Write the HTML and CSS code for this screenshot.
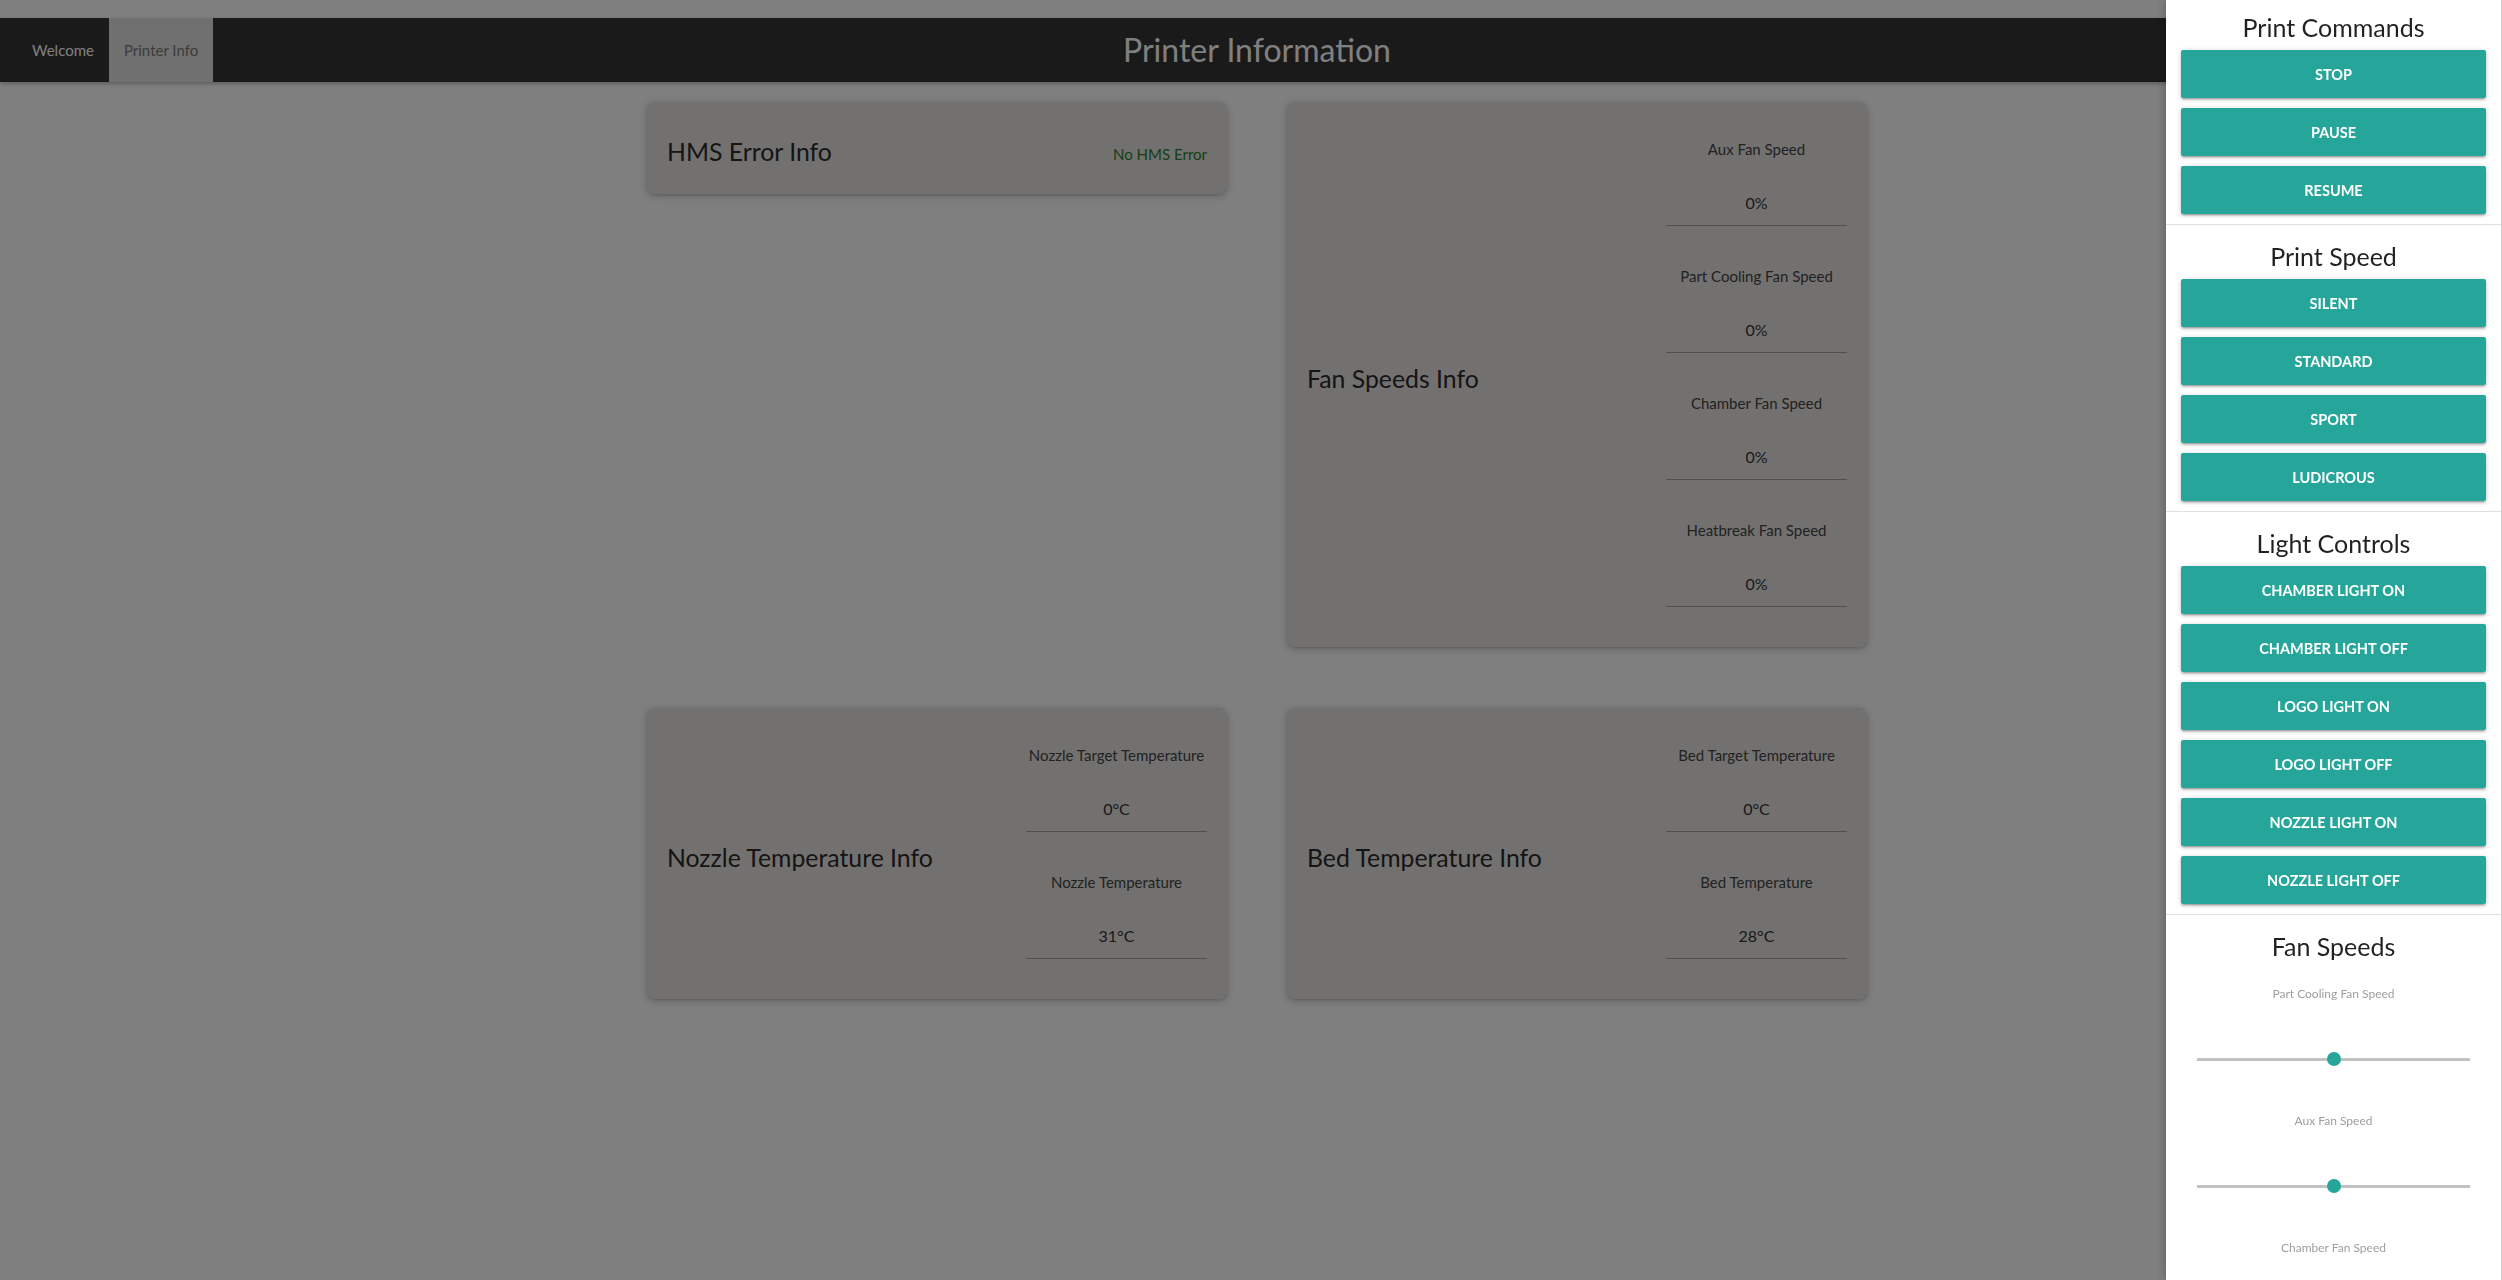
FILE: index.html
```html
<!DOCTYPE html>
<html lang="en">
<head>
<meta charset="utf-8">
<title>Printer Information</title>
<link rel="stylesheet" href="styles.css">
</head>
<body>
<div class="page">
  <nav class="navbar">
    <ul class="tabs">
      <li><a class="tab">Welcome</a></li>
      <li><a class="tab active">Printer Info</a></li>
    </ul>
    <div class="brand">Printer Information</div>
    <div class="nav-spacer"></div>
  </nav>

  <main class="grid">
    <section class="card card-hms">
      <h2 class="card-title">HMS Error Info</h2>
      <span class="hms-ok">No HMS Error</span>
    </section>

    <section class="card">
      <h2 class="card-title">Fan Speeds Info</h2>
      <div class="stats">
        <div class="stat"><div class="stat-label">Aux Fan Speed</div><div class="stat-value">0%</div></div>
        <div class="stat"><div class="stat-label">Part Cooling Fan Speed</div><div class="stat-value">0%</div></div>
        <div class="stat"><div class="stat-label">Chamber Fan Speed</div><div class="stat-value">0%</div></div>
        <div class="stat"><div class="stat-label">Heatbreak Fan Speed</div><div class="stat-value">0%</div></div>
      </div>
    </section>

    <section class="card">
      <h2 class="card-title">Nozzle Temperature Info</h2>
      <div class="stats">
        <div class="stat"><div class="stat-label">Nozzle Target Temperature</div><div class="stat-value">0°C</div></div>
        <div class="stat"><div class="stat-label">Nozzle Temperature</div><div class="stat-value">31°C</div></div>
      </div>
    </section>

    <section class="card">
      <h2 class="card-title">Bed Temperature Info</h2>
      <div class="stats">
        <div class="stat"><div class="stat-label">Bed Target Temperature</div><div class="stat-value">0°C</div></div>
        <div class="stat"><div class="stat-label">Bed Temperature</div><div class="stat-value">28°C</div></div>
      </div>
    </section>
  </main>
</div>

<div class="overlay"></div>

<aside class="sidenav">
  <section class="side-section first">
    <h3 class="side-title">Print Commands</h3>
    <div class="btn-list">
      <button class="btn">Stop</button>
      <button class="btn">Pause</button>
      <button class="btn">Resume</button>
    </div>
  </section>
  <section class="side-section">
    <h3 class="side-title">Print Speed</h3>
    <div class="btn-list">
      <button class="btn">Silent</button>
      <button class="btn">Standard</button>
      <button class="btn">Sport</button>
      <button class="btn">Ludicrous</button>
    </div>
  </section>
  <section class="side-section">
    <h3 class="side-title">Light Controls</h3>
    <div class="btn-list">
      <button class="btn">Chamber Light On</button>
      <button class="btn">Chamber Light Off</button>
      <button class="btn">Logo Light On</button>
      <button class="btn">Logo Light Off</button>
      <button class="btn">Nozzle Light On</button>
      <button class="btn">Nozzle Light Off</button>
    </div>
  </section>
  <section class="side-section last">
    <h3 class="side-title">Fan Speeds</h3>
    <div class="fan-list">
      <div class="fan-item">
        <div class="fan-label">Part Cooling Fan Speed</div>
        <div class="range-wrap"><input class="range" type="range" min="0" max="100" value="50"></div>
      </div>
      <div class="fan-item">
        <div class="fan-label">Aux Fan Speed</div>
        <div class="range-wrap"><input class="range" type="range" min="0" max="100" value="50"></div>
      </div>
      <div class="fan-item">
        <div class="fan-label">Chamber Fan Speed</div>
        <div class="range-wrap"><input class="range" type="range" min="0" max="100" value="50"></div>
      </div>
    </div>
  </section>
</aside>
</body>
</html>
```

FILE: styles.css
```css
* { box-sizing: border-box; }

html, body {
  margin: 0;
  padding: 0;
  background: #ffffff;
  font-family: "Lato", "Open Sans", "Noto Sans", sans-serif;
  color: #333;
}

body { height: 1280px; overflow: hidden; }

.page {
  padding-top: 18px;
}

/* ---------- navbar ---------- */
.navbar {
  height: 64px;
  background: #343434;
  display: grid;
  grid-template-columns: 1fr auto 1fr;
  align-items: center;
  padding-left: 12px;
  box-shadow: 0 2px 4px rgba(0,0,0,0.25);
}

.tabs {
  list-style: none;
  margin: 0 0 0 5px;
  padding: 0;
  display: flex;
  height: 64px;
}

.tab {
  display: block;
  padding: 0 15px;
  line-height: 64px;
  font-size: 15px;
  color: #ffffff;
  cursor: pointer;
}

.tab.active {
  background: #e0e0e0;
  color: #787878;
}

.brand {
  font-size: 32px;
  line-height: 64px;
  color: #ffffff;
  white-space: nowrap;
}

/* ---------- cards ---------- */
.grid {
  display: grid;
  grid-template-columns: 580px 580px;
  column-gap: 60px;
  row-gap: 61px;
  justify-content: center;
  align-items: start;
  padding-left: 12px;
  margin-top: 20px;
}

.card {
  background: #e6e3e0;
  border-radius: 8px;
  box-shadow: 0 2px 10px rgba(0,0,0,0.22), 0 1px 3px rgba(0,0,0,0.12);
  display: flex;
  align-items: center;
  justify-content: space-between;
  padding: 0 20px;
}

.card-hms { height: 92px; }

.card-title {
  margin: 8px 0 0;
  font-size: 24.8px;
  font-weight: 400;
  color: #2a2a2a;
  line-height: 30px;
}

.hms-ok {
  margin-top: 12px;
  font-size: 15px;
  color: #2a7e2a;
}

.stats {
  width: 181px;
  padding: 37px 0 40px;
  display: flex;
  flex-direction: column;
  gap: 40px;
}

.stat {
  text-align: center;
  padding-bottom: 12px;
  border-bottom: 1px solid #9e9e9e;
}

.stat-label {
  font-size: 15px;
  line-height: 20px;
  color: #444;
  white-space: nowrap;
}

.stat-value {
  margin-top: 34px;
  font-size: 16px;
  line-height: 20px;
  color: #333;
}

/* ---------- overlay ---------- */
.overlay {
  position: fixed;
  inset: 0;
  background: rgba(0,0,0,0.5);
  z-index: 10;
}

/* ---------- sidenav ---------- */
.sidenav {
  position: fixed;
  top: 0;
  right: 0;
  width: 336px;
  height: 100vh;
  background: #ffffff;
  border-right: 1px solid #d4d4d4;
  box-shadow: -2px 0 8px rgba(0,0,0,0.2);
  overflow: hidden;
  z-index: 20;
}

.side-section {
  padding: 15px 15px 10px;
  border-bottom: 1px solid #e0e0e0;
}

.side-section.first { padding-top: 11px; }
.side-section.last { border-bottom: none; }

.side-title {
  margin: 0 0 7px;
  font-size: 25px;
  line-height: 32px;
  font-weight: 400;
  text-align: center;
  color: rgba(0,0,0,0.87);
}

.btn-list {
  display: flex;
  flex-direction: column;
  gap: 10px;
}

.btn {
  height: 48px;
  border: none;
  border-radius: 2px;
  background: #26a69a;
  color: #ffffff;
  font-family: inherit;
  font-size: 14.5px;
  font-weight: 700;
  text-transform: uppercase;
  box-shadow: 0 2px 2px 0 rgba(0,0,0,0.14), 0 3px 1px -2px rgba(0,0,0,0.12), 0 1px 5px 0 rgba(0,0,0,0.2);
  cursor: pointer;
}

.fan-list {
  padding: 17px 16px 0;
}

.fan-item {
  margin-bottom: 39px;
}

.fan-label {
  font-size: 12px;
  line-height: 16px;
  text-align: center;
  color: #9e9e9e;
}

.range-wrap {
  margin-top: 42px;
  height: 30px;
  display: flex;
  align-items: center;
}

.range {
  -webkit-appearance: none;
  appearance: none;
  width: 100%;
  height: 30px;
  margin: 0;
  background: transparent;
}

.range::-webkit-slider-runnable-track {
  height: 3px;
  background: #c2c2c2;
  border: none;
}

.range::-webkit-slider-thumb {
  -webkit-appearance: none;
  appearance: none;
  width: 14px;
  height: 14px;
  border-radius: 50%;
  background: #26a69a;
  border: none;
  margin-top: -5.5px;
}
```
